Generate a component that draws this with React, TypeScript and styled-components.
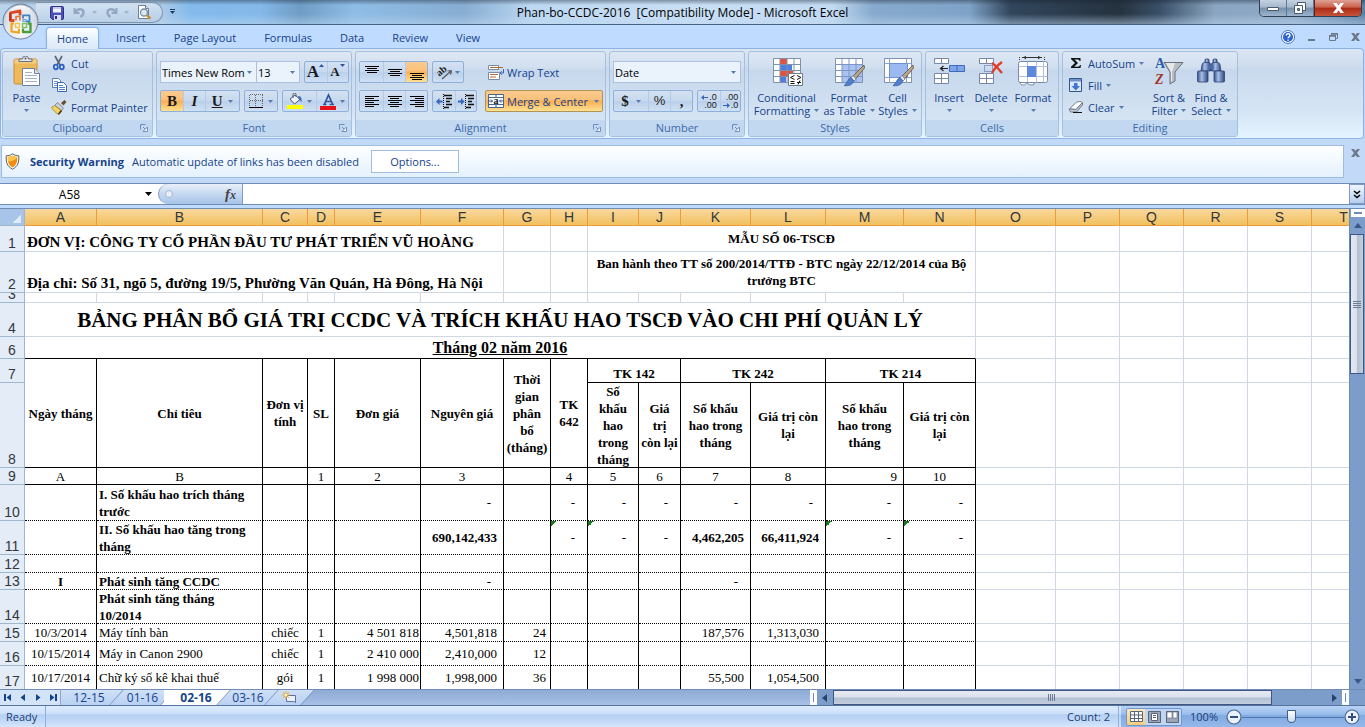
import React from "react";
import styled, { createGlobalStyle, css } from "styled-components";

const GlobalStyle = createGlobalStyle`
  *, *::before, *::after { box-sizing: border-box; }
  html, body, #root { height: 100%; }
  body {
    margin: 0;
    overflow: hidden;
    font-family: "Open Sans", "Noto Sans", sans-serif;
    font-size: 11px;
    color: #15428b;
  }
  button, input, select { font: inherit; color: inherit; margin: 0; padding: 0; border: 0; background: none; }
  button { cursor: default; }
  svg { display: block; flex: none; }
`;

const Shell = styled.div`
  display: flex;
  flex-direction: column;
  height: 100vh;
  background: #bfdbff;
`;

/* ---------- shared bits ---------- */

const Caret = ({ color = "#567db1" }: { color?: string }) => (
  <svg width="5" height="3" viewBox="0 0 5 3"><path d="M0 0h5L2.500 3z" fill={color} /></svg>
);

/* ---------- title bar ---------- */

const TitleBar = styled.header`
  position: relative;
  display: flex;
  align-items: flex-start;
  height: 25px;
  flex: none;
  border-bottom: 1px solid #47607f;
  background:
    linear-gradient(180deg, rgba(20, 30, 44, 0.4) 0, rgba(20, 30, 44, 0) 5px, rgba(255, 255, 255, 0) 14px, rgba(190, 215, 240, 0.5) 24px),
    linear-gradient(90deg, #b9d3ec 0, #a9c9e8 12%, #83bbec 14%, #85b9ea 19%, #6f9cc4 22%, #8ebde6 26%, #87add2 34%, #bcd8f2 39%, #c8dff5 50%, #c2daf2 61%, #86a9cd 64%, #7fa3c8 71%, #31465c 74%, #25323f 82%, #3a5068 85%, #8aa5c1 89%, #8faac7 95%, #5d7fa3 100%);
`;

const Orb = styled.button`
  position: absolute;
  left: 2px;
  top: 3px;
  z-index: 2;
  width: 37px;
  height: 37px;
`;

const QuickAccess = styled.div`
  display: flex;
  align-items: center;
  height: 21px;
  margin: 2px 0 0 36px;
  padding: 0 9px 0 14px;
  border: 1px solid #7f93ab;
  border-left: 0;
  border-radius: 0 11px 11px 0;
  background: linear-gradient(180deg, rgba(235, 242, 250, 0.6), rgba(190, 208, 228, 0.6));
`;

const QuickButton = styled.button<{ $wide?: boolean }>`
  display: flex;
  align-items: center;
  justify-content: space-between;
  width: ${(p) => (p.$wide ? 30 : 16)}px;
  height: 18px;
  margin-right: ${(p) => (p.$wide ? 2 : 7)}px;
  &:last-child { margin-right: 0; }
`;

const Customize = styled.button`
  display: flex;
  flex-direction: column;
  align-items: center;
  gap: 1px;
  margin: 9px 0 0 7px;
  &::before { content: ""; width: 5px; height: 1px; background: #1d3c66; }
`;

const TitleText = styled.h1`
  position: absolute;
  left: 0;
  right: 0;
  top: 3px;
  margin: 0;
  text-align: center;
  font-size: 12px;
  font-weight: 400;
  line-height: 20px;
  color: #000;
  white-space: pre;
`;

const WindowButtons = styled.div`
  display: flex;
  margin: 0 3px 0 auto;
  height: 17px;
  border: 1px solid #2f4154;
  border-top: 0;
  border-radius: 0 0 5px 5px;
  overflow: hidden;
`;

const WindowButton = styled.button<{ $close?: boolean }>`
  display: flex;
  align-items: center;
  justify-content: center;
  width: ${(p) => (p.$close ? 47 : 27)}px;
  border-left: ${(p) => (p.$close ? "1px solid #5c2320" : "0")};
  border-right: ${(p) => (p.$close ? "0" : "1px solid #5b7592")};
  background: ${(p) =>
    p.$close
      ? "linear-gradient(180deg, #dfa093 0, #c9614c 45%, #ad2a15 50%, #c4553a 100%)"
      : "linear-gradient(180deg, #c5d2e0 0, #a4b8cd 45%, #7690ac 50%, #9db4cc 100%)"};
`;

/* ---------- ribbon tabs ---------- */

const TabRow = styled.nav`
  display: flex;
  align-items: flex-end;
  gap: 6px;
  flex: none;
  height: 23px;
  padding-left: 46px;
  background: #bfdbff;
`;

const RibbonTab = styled.button<{ $active?: boolean }>`
  position: relative;
  height: 22px;
  padding: 0 10px 1px;
  border: 1px solid transparent;
  border-bottom: 0;
  border-radius: 4px 4px 0 0;
  ${(p) =>
    p.$active &&
    css`
      margin-bottom: -1px;
      border-color: #8db2e3;
      background: linear-gradient(180deg, #fdfeff 0, #e6effb 60%, #dde9f7 100%);
      box-shadow: 0 0 2px #7fc7e8;
    `}
`;

const DocControls = styled.div`
  display: flex;
  align-items: center;
  gap: 13px;
  align-self: center;
  margin: 0 5px 0 auto;
`;

/* ---------- ribbon ---------- */

const Ribbon = styled.section`
  display: flex;
  gap: 3px;
  flex: none;
  height: 91px;
  margin-right: 1px;
  padding: 2px 1px 3px;
  border: 1px solid #8db2e3;
  border-radius: 4px;
  background: linear-gradient(180deg, #dbe6f4 0, #cfdded 18%, #c9d9ed 22%, #d6e5f5 70%, #e3f4ff 100%);
  box-shadow: 0 1px 1px #9bbbe3;
`;

const GroupBox = styled.section<{ $width: number }>`
  display: flex;
  flex-direction: column;
  flex: none;
  width: ${(p) => p.$width}px;
  height: 86px;
  border: 1px solid #a5bfdf;
  border-radius: 3px;
  background: linear-gradient(180deg, #dee8f5 0, #d1dfef 18%, #c7d8ed 22%, #d9e8f5 100%);
  overflow: hidden;
`;

const GroupBody = styled.div<{ $rows?: boolean }>`
  flex: 1;
  display: flex;
  padding: ${(p) => (p.$rows ? "9px 3px 0" : "0 2px")};
  gap: ${(p) => (p.$rows ? "4px" : "0")};
`;

const GroupLabel = styled.h2`
  display: flex;
  align-items: center;
  height: 16px;
  margin: 0;
  padding: 0 3px;
  font-size: 11px;
  line-height: 16px;
  font-weight: 400;
  color: #3e6aaa;
  background: #c1d8f0;
  span { flex: 1; text-align: center; }
`;

const Launcher = styled.button`
  width: 9px;
  height: 9px;
  margin-left: -9px;
`;

const Stack = styled.div<{ $gap?: number; $width?: number }>`
  display: flex;
  flex-direction: column;
  flex: none;
  gap: ${(p) => p.$gap ?? 0}px;
  width: ${(p) => (p.$width ? p.$width + "px" : "auto")};
`;

const Line = styled.div`
  display: flex;
  gap: 4px;
`;

const BigButton = styled.button<{ $width: number }>`
  display: flex;
  flex-direction: column;
  align-items: center;
  flex: none;
  width: ${(p) => p.$width}px;
  padding-top: 4px;
  line-height: 13px;
  white-space: nowrap;
  > svg { margin-bottom: 3px; }
`;

const LabelTail = styled.span`
  display: flex;
  align-items: center;
  justify-content: center;
  gap: 4px;
  height: 13px;
`;

const SmallButton = styled.button`
  display: flex;
  align-items: center;
  gap: 4px;
  height: 22px;
  padding-left: 3px;
  white-space: nowrap;
  > svg:first-child { width: 16px; }
`;

const ButtonStrip = styled.div`
  display: flex;
  flex: none;
  height: 22px;
  border: 1px solid #8fb0da;
  border-radius: 2px;
  background: linear-gradient(180deg, #d4e1f2 0, #c7d9ee 48%, #bbd0ea 52%, #cfe0f3 100%);
  overflow: hidden;
`;

const hot = css`
  background: linear-gradient(180deg, #f9cb90 0, #fbc078 45%, #fbae52 50%, #fde190 100%);
`;

const StripButton = styled.button<{ $width: number; $on?: boolean }>`
  display: flex;
  align-items: center;
  justify-content: space-evenly;
  width: ${(p) => p.$width}px;
  height: 20px;
  color: #1b1b1b;
  & + & { border-left: 1px solid #b3cbe8; }
  ${(p) => p.$on && hot}
`;

const Glyph = styled.span<{ $italic?: boolean; $underline?: boolean; $sans?: boolean }>`
  font-family: ${(p) => (p.$sans ? '"Liberation Sans", sans-serif' : '"Liberation Serif", serif')};
  font-size: ${(p) => (p.$sans ? 13 : 15)}px;
  line-height: 16px;
  font-weight: ${(p) => (p.$sans ? 400 : 700)};
  font-style: ${(p) => (p.$italic ? "italic" : "normal")};
  text-decoration: ${(p) => (p.$underline ? "underline" : "none")};
`;

const Combo = styled.label<{ $width: number }>`
  position: relative;
  display: flex;
  align-items: center;
  flex: none;
  width: ${(p) => p.$width}px;
  height: 22px;
  border: 1px solid #abc1de;
  background: #eaf2fb;
  & + & { margin-left: -5px; }
  > svg { position: absolute; right: 4px; top: 9px; pointer-events: none; }
`;

const ComboSelect = styled.select`
  appearance: none;
  width: 100%;
  height: 20px;
  padding: 0 8px 0 1px;
  color: #000;
  outline: 0;
  text-overflow: clip;
`;

const Divider = styled.div`
  width: 1px;
  height: 55px;
  margin-top: -3px;
  background: #9fbbe0;
  box-shadow: 1px 0 0 #edf4fc;
`;

const WrapButton = styled.button`
  display: flex;
  align-items: center;
  gap: 3px;
  width: 118px;
  height: 22px;
  padding-left: 3px;
`;

const MergeButton = styled(WrapButton)`
  border: 1px solid #b39355;
  border-radius: 2px;
  padding: 0 3px 0 2px;
  white-space: nowrap;
  ${hot}
  > svg:last-child { margin-left: auto; }
`;

/* ---------- message bar ---------- */

const MessageRow = styled.div`
  display: flex;
  flex: none;
  height: 44px;
  padding: 6px 0 5px 1px;
  background: #c2d9f7;
`;

const MessageBar = styled.div`
  display: flex;
  align-items: center;
  flex: 1;
  height: 33px;
  padding-left: 3px;
  border: 1px solid #9ebce0;
  background: linear-gradient(180deg, #ffffff 0, #f1f8fe 50%, #e4f1fe 100%);
  strong { margin: 0 8px 0 10px; }
`;

const OptionsButton = styled.button`
  width: 88px;
  height: 23px;
  margin-left: 12px;
  border: 1px solid #9ebce0;
  background: #fff;
`;

const MessageClose = styled.button`
  align-self: flex-start;
  width: 21px;
  padding: 4px 0 0 7px;
`;

/* ---------- formula bar ---------- */

const FormulaRow = styled.div`
  display: flex;
  flex: none;
  height: 22px;
  border-top: 1px solid #6f8db5;
  border-bottom: 1px solid #6f8db5;
  background: #fff;
`;

const NameBox = styled.label`
  display: flex;
  align-items: center;
  width: 158px;
  padding-right: 6px;
`;

const NameInput = styled.input`
  width: 100%;
  padding-right: 6px;
  text-align: center;
  font-size: 12px;
  color: #000;
  outline: 0;
`;

const FxPill = styled.div`
  display: flex;
  align-items: center;
  justify-content: space-between;
  width: 85px;
  padding: 0 6px;
  border: 1px solid #7d9bc6;
  border-width: 0 1px;
  border-radius: 11px 0 0 11px;
  background: linear-gradient(180deg, #e9f1fb 0, #c5d8f0 50%, #a7c3ea 100%);
`;

const FxButton = styled.button`
  font-family: "Liberation Serif", serif;
  font-style: italic;
  font-weight: 700;
  font-size: 15px;
  line-height: 18px;
  color: #444;
  small { font-size: 12px; }
`;

const FormulaInput = styled.input`
  flex: 1;
  padding: 0 4px;
  color: #000;
  outline: 0;
`;

const ExpandButton = styled.button`
  display: flex;
  align-items: center;
  justify-content: center;
  width: 16px;
  border: 1px solid #7d9bc6;
  background: linear-gradient(180deg, #eff5fd, #b7cdee);
`;

/* ---------- sheet ---------- */

const SheetArea = styled.main`
  display: flex;
  flex: 1;
  min-height: 0;
  margin-top: 3px;
  border-top: 1px solid #6f8db5;
`;

const SheetView = styled.div`
  flex: 1;
  min-width: 0;
  overflow: hidden;
  background: #fff;
`;

const Grid = styled.table`
  width: 1376px;
  table-layout: fixed;
  border-collapse: separate;
  border-spacing: 0;
  font-family: "Liberation Serif", serif;
  font-size: 13px;
  line-height: 17px;
  color: #000;
`;

const Corner = styled.td`
  height: 17px;
  padding: 0;
  border-right: 1px solid #9eb6ce;
  border-bottom: 1px solid #9eb6ce;
  background: linear-gradient(135deg, transparent 0 50%, #dfeafa 50% 100%) 12px 5px / 9px 9px no-repeat, #a9c4e9;
`;

const ColHead = styled.th`
  height: 17px;
  padding: 0;
  border-right: 1px solid #ee9a3a;
  border-bottom: 1px solid #ee9a3a;
  background: linear-gradient(180deg, #f9d99f 0, #f1c15f 100%);
  font-family: "Liberation Sans", Arial, sans-serif;
  font-size: 14px;
  font-weight: 400;
  line-height: 16px;
  color: #33373c;
`;

const RowHead = styled.th`
  padding: 0;
  border-right: 1px solid #9eb6ce;
  border-bottom: 1px solid #9eb6ce;
  background: #e4ecf7;
  font-family: "Liberation Sans", Arial, sans-serif;
  font-size: 14px;
  line-height: 16px;
  color: #33373c;
`;

type LineKind = "grid" | "solid" | "dotted";
const lineCss: Record<LineKind, string> = {
  grid: "1px solid #d0d7e5",
  solid: "1px solid #000",
  dotted: "1px dotted #000",
};

const Cell = styled.td<{ $bottom: LineKind; $right: LineKind; $flag?: boolean }>`
  padding: 0;
  border-bottom: ${(p) => lineCss[p.$bottom]};
  border-right: ${(p) => lineCss[p.$right]};
  ${(p) => p.$flag && css`background: linear-gradient(135deg, #1b7a1b 50%, transparent 50%) 0 0 / 6px 6px no-repeat;`}
`;

type HAlign = "left" | "center" | "right";
const CellText = styled.div<{ $height: number; $align: HAlign; $low?: boolean; $bold?: boolean; $pad: number; $size?: number; $underline?: boolean }>`
  display: flex;
  align-items: ${(p) => (p.$low ? "flex-end" : "center")};
  justify-content: ${(p) => ({ left: "flex-start", center: "center", right: "flex-end" })[p.$align]};
  height: ${(p) => p.$height - 1}px;
  padding: 0 ${(p) => (p.$align === "right" ? p.$pad : 0)}px 0 ${(p) => (p.$align === "left" ? 2 : 0)}px;
  overflow: hidden;
  white-space: pre;
  text-align: ${(p) => (p.$align === "left" ? "left" : "center")};
  font-weight: ${(p) => (p.$bold ? 700 : 400)};
  ${(p) => p.$size && css`font-size: ${p.$size}px; line-height: ${p.$size + 3}px;`}
  text-decoration: ${(p) => (p.$underline ? "underline" : "none")};
`;

/* ---------- scroll bars ---------- */

const VScroll = styled.div`
  display: flex;
  flex-direction: column;
  align-items: center;
  flex: none;
  width: 16px;
  border-left: 1px solid #6d8bb8;
  background: #7c9dca;
`;

const SplitV = styled.div`
  width: 14px;
  height: 8px;
  border: 3px solid #fff;
  background: #6d8bb8;
`;

const VTrack = styled.div`
  flex: 1;
  width: 100%;
`;

const VThumb = styled.div`
  display: flex;
  align-items: center;
  justify-content: center;
  width: 14px;
  height: 32%;
  border: 1px solid #3f5781;
  background: linear-gradient(90deg, #e4e8f1 0, #dbe2ec 45%, #b1bfd2 55%, #c6d0df 100%);
`;

const ArrowButton = styled.button`
  display: flex;
  align-items: center;
  justify-content: center;
  flex: none;
  width: 16px;
  height: 17px;
`;

const BottomRow = styled.div`
  display: flex;
  flex: none;
  height: 17px;
  border-top: 1px solid #6f8db5;
  border-bottom: 1px solid #56739f;
  background: #9ab6de;
`;

const TabStrip = styled.nav`
  flex: 54;
  min-width: 0;
  display: flex;
  background: linear-gradient(180deg, #8fabd6, #a6c0e6);
`;

const TabNav = styled.div`
  display: flex;
  flex: none;
  width: 61px;
  background: #d3e3f8;
  border-right: 1px solid #8aa8d3;
`;

const NavButton = styled.button`
  display: flex;
  align-items: center;
  justify-content: center;
  width: 15px;
`;

const TabList = styled.div`
  display: flex;
  overflow: hidden;
  padding-right: 8px;
`;

const SheetTab = styled.button<{ $width: number; $active?: boolean }>`
  position: relative;
  display: flex;
  align-items: center;
  justify-content: center;
  z-index: ${(p) => (p.$active ? 2 : 1)};
  width: ${(p) => p.$width}px;
  height: 15px;
  font-size: 12px;
  line-height: 15px;
  font-weight: ${(p) => (p.$active ? 700 : 400)};
  &::before {
    content: "";
    position: absolute;
    inset: 0;
    z-index: -1;
    transform: skewX(-42deg);
    border-right: 1px solid #7a98c6;
    background: ${(p) => (p.$active ? "#fff" : "linear-gradient(180deg, #cfe0f7, #b9d1f2)")};
  }
  &:first-child::before { left: -12px; }
  ${(p) =>
    p.$active &&
    css`
      &::after {
        content: "";
        position: absolute;
        inset: 0 50% 0 -4px;
        z-index: -1;
        background: #fff;
      }
    `}
`;

const HScroll = styled.div`
  flex: 37;
  min-width: 0;
  display: flex;
  align-items: center;
  background: #7c9dca;
`;

const SplitH = styled.div`
  flex: none;
  width: 7px;
  height: 15px;
  border: 3px solid #fff;
  background: #6d8bb8;
`;

const HTrack = styled.div`
  flex: 1;
  height: 15px;
`;

const HThumb = styled.div`
  display: flex;
  align-items: center;
  justify-content: center;
  width: 89%;
  height: 15px;
  border: 1px solid #3f5781;
  background: linear-gradient(180deg, #e6eaf2 0, #dbe2ec 45%, #b3c0d3 55%, #c4cfdf 100%);
`;

const ScrollCorner = styled.div`
  flex: none;
  width: 16px;
`;

/* ---------- status bar ---------- */

const StatusBar = styled.footer`
  display: flex;
  align-items: stretch;
  flex: none;
  height: 21px;
  color: #1a3c74;
  background: linear-gradient(180deg, #dcebfd 0, #cfe1fa 35%, #b5d0f2 42%, #c3daf7 75%, #d5e7fc 100%);
`;

const StatusText = styled.span<{ $end?: boolean }>`
  display: flex;
  align-items: center;
  margin-left: ${(p) => (p.$end ? "auto" : "0")};
  padding: 0 8px 0 6px;
  border-right: 1px solid #90b0dc;
`;

const StatusTools = styled.div`
  display: flex;
  align-items: center;
  gap: 8px;
  margin-left: 2px;
  padding: 0 5px;
  background: linear-gradient(180deg, #b9d3f5 0, #9abdeb 40%, #82abe2 45%, #94b8e9 100%);
`;

const ViewButtons = styled.div`
  display: flex;
  height: 18px;
  border: 1px solid #6e96cf;
  border-radius: 2px;
  overflow: hidden;
`;

const ViewButton = styled.button<{ $on?: boolean }>`
  display: flex;
  align-items: center;
  justify-content: center;
  width: 18px;
  background: ${(p) => (p.$on ? "linear-gradient(180deg, #fbe9bd, #f6cd79)" : "#c0d5f2")};
`;

const ZoomBox = styled.div`
  display: flex;
  align-items: center;
`;

const ZoomSlider = styled.input`
  appearance: none;
  width: 102px;
  height: 16px;
  background: linear-gradient(#5277ad, #5277ad) 0 8px / 100% 1px no-repeat;
  &::-webkit-slider-thumb {
    appearance: none;
    width: 9px;
    height: 13px;
    background: linear-gradient(180deg, #fff, #c7d8ee);
    border: 1px solid #405d8c;
    border-radius: 1px 1px 5px 5px;
  }
`;

/* ---------- icons ---------- */

const OfficeOrb = () => (
  <svg width="37" height="37" viewBox="0 0 37 37">
    <defs>
      <radialGradient id="orb" cx="50%" cy="75%" r="75%">
        <stop offset="0" stopColor="#fff" />
        <stop offset="0.55" stopColor="#dde3ec" />
        <stop offset="1" stopColor="#a9b6c8" />
      </radialGradient>
      <linearGradient id="orbTop" x1="0" y1="0" x2="0" y2="1">
        <stop offset="0" stopColor="#fff" stopOpacity="0.95" />
        <stop offset="1" stopColor="#e8edf4" stopOpacity="0.3" />
      </linearGradient>
    </defs>
    <circle cx="18.500" cy="18.500" r="17.500" fill="url(#orb)" stroke="#71829a" />
    <path d="M3 18a15.500 15.500 0 0 1 31 0c-8-3-23-3-31 0z" fill="url(#orbTop)" />
    <g fill="none" strokeLinejoin="round">
      <path d="M12.500 17.500H8.500V9.800L18 8v4.500" stroke="#dd4a22" strokeWidth="2.800" />
      <path d="M8 17.500V10" stroke="#b52c10" strokeWidth="1.600" />
      <path d="M14 17.500v-4h4v4" stroke="#ea7338" strokeWidth="1.600" />
      <path d="M21 15.500v-3.200h6.500v6h-3.500" stroke="#3b82c9" strokeWidth="1.800" />
      <path d="M21 18.500v-2h3v2z" stroke="#69a7e0" strokeWidth="1.200" />
      <path d="M12 20.500H9.500v8l7.500 1.200v-4" stroke="#f0a51c" strokeWidth="2.200" />
      <path d="M13.500 20.500h4v4h-4z" stroke="#f7c54a" strokeWidth="1.400" />
      <path d="M25.500 20.500h3v8.500H21v-3.500" stroke="#4b9e3f" strokeWidth="2.400" />
      <path d="M20.500 20.500h4v4h-4z" stroke="#7cc060" strokeWidth="1.400" />
    </g>
  </svg>
);

const SaveIcon = () => (
  <svg width="14" height="14" viewBox="0 0 14 14">
    <path d="M.5 1.500a1 1 0 0 1 1-1h11a1 1 0 0 1 1 1v11a1 1 0 0 1-1 1h-10l-2-2z" fill="#4a52b8" stroke="#2b3086" />
    <path d="M3 1h8v5.500H3z" fill="#f1f4fb" />
    <path d="M3 1h8v2H3z" fill="#c6cdea" />
    <path d="M4 9h7v5H4z" fill="#d7dcee" />
    <path d="M5 10h2v3H5z" fill="#2b3086" />
  </svg>
);

const UndoIcon = ({ flip }: { flip?: boolean }) => (
  <svg width="13" height="13" viewBox="0 0 13 13">
    <g transform={flip ? "matrix(-1 0 0 1 13 0)" : undefined}>
      <path d="M1.500 2v5h5" fill="none" stroke="#94a7c1" strokeWidth="2" />
      <path d="M2.500 6C5 2 10.500 2.500 10.500 6.500c0 2-1.500 3.500-3 4.500" fill="none" stroke="#94a7c1" strokeWidth="2.400" />
    </g>
  </svg>
);

const PreviewIcon = () => (
  <svg width="15" height="15" viewBox="0 0 15 15">
    <path d="M1.500.5h7l3 3v10h-10z" fill="#fff" stroke="#6f7f94" />
    <path d="M8.500.5v3h3" fill="#dbe3ee" stroke="#6f7f94" />
    <circle cx="7" cy="7.500" r="3.500" fill="#d6eaf8" stroke="#7d8ea3" strokeWidth="1.300" />
    <path d="M9.600 10l3.900 3.700" stroke="#c98a2c" strokeWidth="2.400" />
  </svg>
);

const HelpIcon = () => (
  <svg width="14" height="14" viewBox="0 0 14 14">
    <circle cx="7" cy="7" r="6.500" fill="#fff" stroke="#4676c4" />
    <circle cx="7" cy="7" r="5" fill="#2a62d0" />
    <path d="M5.200 5.600c0-2.400 3.800-2.400 3.800 0 0 1.300-1.900 1.300-1.900 2.700M7.100 9.400v1.400" fill="none" stroke="#fff" strokeWidth="1.400" />
  </svg>
);

const CloseX = ({ size = 9, color = "#6c7887" }: { size?: number; color?: string }) => (
  <svg width={size} height={size - 1} viewBox="0 0 9 8">
    <path d="M0 0h3l1.500 2L6 0h3L6 4l3 4H6L4.500 6 3 8H0l3-4z" fill={color} />
  </svg>
);

const LaunchIcon = () => (
  <svg width="8" height="8" viewBox="0 0 8 8">
    <path d="M.5 5.500v-5h5" fill="none" stroke="#6d8fbe" />
    <path d="M3 3l3 3" stroke="#6d8fbe" />
    <path d="M7.500 3v4.500H3z" fill="#fff" stroke="#6d8fbe" />
  </svg>
);

const PasteIcon = () => (
  <svg width="30" height="32" viewBox="0 0 30 32">
    <rect x="2" y="3" width="23" height="25" rx="1.500" fill="#edb95a" stroke="#c98f35" />
    <path d="M2.500 3.500h22v4h-22z" fill="#f3cd82" />
    <path d="M7 5.500V3h3.500a3 3 0 0 1 6 0H20v2.500z" fill="#e4e7ec" stroke="#6b7079" />
    <circle cx="13.500" cy="2.500" r="1" fill="#555" />
    <path d="M10.500 12.500h12l5 5v12h-17z" fill="#fff" stroke="#6d7f9b" />
    <path d="M22.500 12.500v5h5" fill="#dfe6f0" stroke="#6d7f9b" />
    <path d="M13 16.500h7M13 19.500h12M13 22.500h12M13 25.500h12" stroke="#a3b2c9" />
  </svg>
);

const CutIcon = () => (
  <svg width="16" height="16" viewBox="0 0 16 16">
    <path d="M4 1l5 9M11 1L6 10" stroke="#5b6675" strokeWidth="1.700" />
    <ellipse cx="4.800" cy="12" rx="2" ry="2.300" fill="none" stroke="#2f5fc0" strokeWidth="1.800" />
    <ellipse cx="10.800" cy="12" rx="2" ry="2.300" fill="none" stroke="#2f5fc0" strokeWidth="1.800" />
  </svg>
);

const CopyIcon = () => (
  <svg width="16" height="16" viewBox="0 0 16 16">
    <path d="M1.500 1.500h6l2 2v7h-8z" fill="#fff" stroke="#5b7cb4" />
    <path d="M3 4.500h4M3 6.500h4M3 8.500h4" stroke="#6f98d8" />
    <path d="M6.500 5.500h6l3 3v6h-9z" fill="#fff" stroke="#3d65a8" />
    <path d="M8 8.500h4M8 10.500h6M8 12.500h6" stroke="#4c7fd0" />
  </svg>
);

const PainterIcon = () => (
  <svg width="16" height="16" viewBox="0 0 16 16">
    <path d="M10 4l3.500-3 2 2-3 3.500z" fill="#6a4c2e" />
    <path d="M6.500 3.500l6 5.500-2 2.500-7-5z" fill="#c6ced9" stroke="#6c7787" strokeWidth=".8" />
    <path d="M3.500 6.500l7 5-3 4C5 14 2 11 .5 8.500z" fill="#f3d566" stroke="#a07d22" strokeWidth=".8" />
    <path d="M7.500 15.300l3-3.800" stroke="#4a3414" strokeWidth="1.600" />
  </svg>
);

const BorderIcon = () => (
  <svg width="14" height="14" viewBox="0 0 14 14" shapeRendering="crispEdges">
    <path d="M.5.5h13M.5 6.500h13M.5.5v12M6.500.5v12M13.500.5v12" fill="none" stroke="#666" strokeDasharray="1 1" />
    <path d="M0 13.500h14" stroke="#000" />
  </svg>
);

const FillColorIcon = () => (
  <svg width="17" height="16" viewBox="0 0 17 16">
    <path d="M3 6l5-4 5 4.500-5.500 4.500z" fill="#eef1f6" stroke="#4e5a6b" />
    <path d="M6 5V1.500a1.500 1.500 0 0 1 3 0V4" fill="none" stroke="#4e5a6b" />
    <path d="M11 3c3 0 4 2 3.500 6.500-1-2-2-2.500-2.500-3z" fill="#4169b0" />
    <path d="M0 12h16v4H0z" fill="#ffff00" />
  </svg>
);

const FontColorIcon = () => (
  <svg width="17" height="17" viewBox="0 0 17 17">
    <path d="M3 11.500h3.500M9.500 11.500H14M4.500 11L8.500 2l4 9M6 8.500h5" fill="none" stroke="#2f569e" strokeWidth="1.700" />
    <path d="M0 13h16v4H0z" fill="#e8111b" />
  </svg>
);

const GrowIcon = ({ down }: { down?: boolean }) => (
  <svg width="6" height="4" viewBox="0 0 6 4">
    <path d={down ? "M0 0h5L2.500 3z" : "M0 3h5L2.500 0z"} fill="#2f569e" />
  </svg>
);

const GrowLabel = styled.span<{ $small?: boolean }>`
  display: flex;
  align-items: flex-start;
  font-family: "Liberation Serif", serif;
  font-weight: 700;
  font-size: ${(p) => (p.$small ? 13 : 17)}px;
  line-height: 16px;
`;

type BarKind = "top" | "middle" | "bottom" | "left" | "center" | "right";
const Bars = ({ kind }: { kind: BarKind }) => {
  const start = { top: 1, middle: 4, bottom: 8, left: 2, center: 2, right: 2 }[kind];
  const vertical = kind === "top" || kind === "middle" || kind === "bottom";
  const shortWidth = vertical ? 10 : 9;
  const shortX = kind === "left" ? 0 : kind === "right" ? 14 - shortWidth : 2;
  return (
    <svg width="14" height="15" viewBox="0 0 14 15" shapeRendering="crispEdges">
      {Array.from({ length: vertical ? 4 : 6 }, (_, i) => (
        <rect key={i} x={i % 2 ? shortX : 0} y={start + i * 2} width={i % 2 ? shortWidth : 14} height={1} fill="#000" />
      ))}
    </svg>
  );
};

const IndentIcon = ({ right }: { right?: boolean }) => (
  <svg width="17" height="15" viewBox="0 0 17 15">
    <path d="M8 1.500h8M10 4.500h6M10 7.500h4M10 10.500h6M8 13.500h5" stroke="#111" strokeWidth="1.600" />
    <path d="M7.500 0v15" stroke="#111" strokeDasharray="1 1" />
    <path d={right ? "M0 6.500h3v-2.500l3.500 3.500L3 11V8.500H0z" : "M6.500 6.500h-3v-2.500L0 7.500 3.500 11V8.500h3z"} fill="#3566bd" />
  </svg>
);

const OrientIcon = () => (
  <svg width="17" height="18" viewBox="0 0 17 18">
    <text x="2" y="12" fontSize="10" fontWeight="700" fontFamily="Liberation Serif" fill="#222" transform="rotate(-40 5 11)">ab</text>
    <path d="M6 16l9-8M15.500 7.500l-4 .500M15.500 7.500l-1 4" fill="none" stroke="#555" strokeWidth="1.200" />
  </svg>
);

const WrapIcon = () => (
  <svg width="16" height="15" viewBox="0 0 16 15">
    <path d="M.5.500h10v4H.5z" fill="#fff" stroke="#7d8ba0" />
    <path d="M2 2.500h13" stroke="#b36b34" />
    <path d="M.5 7.500h11v7H.5z" fill="#fff" stroke="#7d8ba0" />
    <path d="M2 9.500h8M2 12h6" stroke="#b36b34" />
    <path d="M15.500 4v4h-3M13.800 6.200L12.200 8l1.600 1.800" fill="none" stroke="#3566bd" />
  </svg>
);

const MergeIcon = () => (
  <svg width="16" height="14" viewBox="0 0 16 14">
    <path d="M.5.500h15v13H.5z" fill="#fff" stroke="#47658f" />
    <path d="M.5 3.500h15M.5 10.500h15M8 .5v3M8 10.500v3" stroke="#47658f" />
    <path d="M1 7h3.500M11.500 7H15M3 5.500L4.500 7 3 8.500M13 5.500L11.500 7 13 8.500" fill="none" stroke="#2b58ab" />
    <text x="5.500" y="9.500" fontSize="10" fontWeight="700" fontFamily="Liberation Serif" fill="#111">a</text>
  </svg>
);

const DecimalLabel = styled.span`
  display: flex;
  flex-direction: column;
  align-items: flex-end;
  font-family: "Liberation Sans", sans-serif;
  font-size: 9px;
  line-height: 8px;
  span { display: flex; align-items: center; gap: 1px; }
`;

const TinyArrow = ({ right }: { right?: boolean }) => (
  <svg width="7" height="5" viewBox="0 0 7 5">
    <path d={right ? "M0 2h4V0l3 2.500L4 5V3H0z" : "M7 2H3V0L0 2.500 3 5V3h4z"} fill="#3566bd" />
  </svg>
);

const GridBase = ({ children }: { children?: React.ReactNode }) => (
  <svg width="32" height="32" viewBox="0 0 32 32">
    <path d="M2.500 2.500h27v24h-27z" fill="#fff" stroke="#8091ad" />
    {children}
  </svg>
);

const Brush = () => (
  <g>
    <path d="M31 9L20 20l2.500 3L31.500 12z" fill="#b9a68a" stroke="#5a5348" strokeWidth=".8" />
    <path d="M20 19.500l3 3.500-2 2-3-3.200z" fill="#e6e9ee" stroke="#6c7787" strokeWidth=".7" />
    <path d="M18 21.500l3 3.500c-1.500 4-6 5.500-10 4.500 3-1.500 3.500-6.500 7-8z" fill="#4f7fce" stroke="#315a9f" strokeWidth=".7" />
  </g>
);

const ConditionalIcon = () => (
  <GridBase>
    <path d="M9 3h7v6H9zM9 15h13v6H9z" fill="#e2523d" />
    <path d="M9 9h12v6H9zM9 21h6v5H9z" fill="#4f7de0" />
    <path d="M2.500 8.500h27M2.500 14.500h27M2.500 20.500h27M9 3v24M16 3v24M23 3v24" stroke="#8091ad" fill="none" />
    <path d="M17.500 17.500h14v12h-14z" fill="#fff" stroke="#707a88" />
    <path d="M23.500 19.500l-4 2 4 2M19.500 25.500h4M19.500 27.500h4M26 19.500l4 2-4 2M26 26.500h4M29 24.500l-2 4" fill="none" stroke="#111" />
  </GridBase>
);

const TableIcon = () => (
  <GridBase>
    <path d="M9 9h20v17H9z" fill="#a9c2f1" />
    <path d="M2.500 8.500h27M2.500 14.500h27M2.500 20.500h27M9 3v24M16 3v24M23 3v24" stroke="#7f96c4" fill="none" />
    <Brush />
  </GridBase>
);

const CellStyleIcon = () => (
  <GridBase>
    <path d="M2.500 7.500h27M2.500 21.500h27M7.500 3v24M24.500 3v24" stroke="#8fa2c4" fill="none" />
    <path d="M7.500 7.500h18v14h-18z" fill="#9db9f1" stroke="#6c8fd8" />
    <Brush />
  </GridBase>
);

const InsertIcon = () => (
  <svg width="32" height="32" viewBox="0 0 32 32">
    <path d="M1.500 2.500h14v5h-14zM8.500 2.500v5M1.500 17.500h14v10h-14zM8.500 17.500v10M1.500 22.500h14" fill="#fff" stroke="#7688a5" />
    <path d="M16.500 9.500h15v6h-15z" fill="#7ea4ea" stroke="#3f69b8" />
    <path d="M24 9.500v6" stroke="#3f69b8" />
    <path d="M8 12.500h7M10.500 10l-3 2.500 3 2.500" fill="none" stroke="#222" strokeWidth="1.200" />
  </svg>
);

const DeleteIcon = () => (
  <svg width="32" height="32" viewBox="0 0 32 32">
    <path d="M4.500 2.500h14v5h-14zM11.500 2.500v5M4.500 17.500h14v10h-14zM11.500 17.500v10M4.500 22.500h14" fill="#fff" stroke="#7688a5" />
    <path d="M9.500 9.500h8v6h-8z" fill="none" stroke="#3f5fa8" strokeDasharray="1 1" />
    <path d="M17 7c3 2 7 6 10 10M27 6c-4 3-8 7-10 11" fill="none" stroke="#e23a24" strokeWidth="2.200" />
  </svg>
);

const FormatIcon = () => (
  <svg width="32" height="32" viewBox="0 0 32 32">
    <path d="M2.500 4V0M27.500 4V0" stroke="#333" strokeDasharray="1 1" />
    <path d="M5 1.500h20M9 0L7 1.500 9 3M21 0l2 1.500L21 3" fill="none" stroke="#333" />
    <rect x="1.500" y="5.500" width="29" height="21" rx="2" fill="#fff" stroke="#7688a5" />
    <path d="M1.500 10.500h29M1.500 20.500h29M10.500 5.500v21M19.500 5.500v21M26.500 5.500v21" stroke="#b4c1d6" />
    <rect x="10" y="10" width="9" height="11" fill="#5b87dc" />
    <path d="M3 26.500c0 3 5 3 6 1s3 3 8 1v-2z" fill="#fff" stroke="#7688a5" />
  </svg>
);

const SigmaIcon = () => (
  <svg width="16" height="14" viewBox="0 0 16 14">
    <path d="M3 2h9.500v3h-1c-.2-1-.7-1.500-2-1.500H6.500L10 7l-3.800 3.700h3.600c1.300 0 1.900-.5 2.200-1.700h1L12.500 12H3v-1.200L7 7 3 3z" fill="#111" />
  </svg>
);

const FillIcon = () => (
  <svg width="16" height="16" viewBox="0 0 16 16">
    <path d="M1.500 1.500h12v13h-12z" fill="#dbe7fa" stroke="#33558f" />
    <path d="M2 2h11v2.500H2z" fill="#6f93cf" />
    <path d="M6 6h3.500v3H12l-4.200 4.500L3.500 9H6z" fill="#3f74d8" />
  </svg>
);

const EraserIcon = () => (
  <svg width="16" height="14" viewBox="0 0 16 14">
    <path d="M1.500 9L8 2.500c1-1 6-1.500 6.500 0L8 9.500z" fill="#fdfdfd" stroke="#707a88" />
    <path d="M1.500 9L8 9.500l6.500-7v2.500L8.500 12H3C1.500 11.500 1 10 1.500 9z" fill="#c4cad4" stroke="#707a88" />
    <path d="M5 12.500h9" stroke="#111" />
  </svg>
);

const SortIcon = () => (
  <svg width="32" height="32" viewBox="0 0 32 32">
    <path d="M11 6.500h19L22 16v9l-5 3V16z" fill="#b9bdc4" stroke="#6a6f78" />
    <path d="M13 7h9l-3 9v9l-1 1V16z" fill="#e6e8ec" />
    <text x="2" y="12" fontSize="14" fontWeight="700" fontFamily="Liberation Serif" fill="#2f5ca8">A</text>
    <text x="2" y="28" fontSize="14" fontWeight="700" fontStyle="italic" fontFamily="Liberation Serif" fill="#a33129">Z</text>
  </svg>
);

const FindIcon = () => (
  <svg width="32" height="32" viewBox="0 0 32 32">
    <defs>
      <linearGradient id="bino" x1="0" y1="0" x2="1" y2="0">
        <stop offset="0" stopColor="#33528f" />
        <stop offset="0.400" stopColor="#a9c1e8" />
        <stop offset="1" stopColor="#2c4680" />
      </linearGradient>
    </defs>
    <g fill="url(#bino)" stroke="#2c4274" strokeWidth=".8">
      <rect x="10" y="3" width="4" height="5" rx="1" />
      <rect x="18" y="3" width="4" height="5" rx="1" />
      <path d="M7 9c0-1.500 1-2.500 3-2.500h3.500c1.500 0 2 1 2 2V15H6z" />
      <path d="M16.500 15V8.500c0-1 .5-2 2-2H22c2 0 3 1 3 2.500l1 6z" />
      <rect x="2.500" y="15" width="10.500" height="11" rx="1" />
      <rect x="19" y="15" width="10.500" height="11" rx="1" />
    </g>
    <rect x="13.500" y="9" width="5" height="4" fill="#4c6aa6" />
  </svg>
);

const ShieldIcon = () => (
  <svg width="15" height="17" viewBox="0 0 15 17">
    <path d="M7.500.8c2 1.500 4 2 6.200 2 .6 6-.7 10.500-6.200 13.400C2 13.300.7 8.800 1.300 2.800c2.200 0 4.200-.5 6.200-2z" fill="#fff" stroke="#5b5f68" />
    <path d="M7.500 2.600c1.500 1 3 1.400 4.700 1.500.3 4.700-.7 8.100-4.700 10.400-4-2.300-5-5.700-4.700-10.400 1.700-.1 3.200-.5 4.700-1.500z" fill="#f58a10" />
    <path d="M7.500 2.600c1.500 1 3 1.400 4.700 1.500-1 2.500-5 4.500-9.400 4.500-.1-1.500-.1-3 0-4.500 1.700-.1 3.200-.5 4.700-1.500z" fill="#fdc64a" />
  </svg>
);

const Triangle = ({ d, color = "#24436f" }: { d: "up" | "down" | "left" | "right"; color?: string }) => {
  const path = { up: "M0 6h8L4 1z", down: "M0 2h8L4 7z", left: "M6 0v8L1 4z", right: "M2 0v8l5-4z" }[d];
  return <svg width="8" height="8" viewBox="0 0 8 8"><path d={path} fill={color} /></svg>;
};

const NavIcon = ({ d }: { d: string }) => (
  <svg width="8" height="7" viewBox="0 0 8 7"><path d={d} fill="#15428b" /></svg>
);

const ZoomCircle = ({ plus }: { plus?: boolean }) => (
  <svg width="16" height="16" viewBox="0 0 16 16">
    <circle cx="8" cy="8" r="7" fill="#eaf1fb" stroke="#4c6896" strokeWidth="1.200" />
    <path d="M4 8h8" stroke="#33507f" strokeWidth="2" />
    {plus && <path d="M8 4v8" stroke="#33507f" strokeWidth="2" />}
  </svg>
);

/* ---------- data ---------- */

type Item = {
  t?: string;
  span?: number;
  rows?: number;
  align?: HAlign;
  bold?: boolean;
  low?: boolean;
  pad?: number;
  size?: number;
  underline?: boolean;
  bottom?: LineKind;
  right?: LineKind;
  flag?: boolean;
};

const columns: [string, number][] = [
  ["A", 72], ["B", 166], ["C", 45], ["D", 27], ["E", 86], ["F", 83], ["G", 47], ["H", 37], ["I", 51], ["J", 42],
  ["K", 70], ["L", 75], ["M", 78], ["N", 72], ["O", 80], ["P", 64], ["Q", 64], ["R", 64], ["S", 64], ["T", 64],
];

const rowHeights: Record<number, number> = {
  1: 26, 2: 41, 3: 10, 4: 34, 6: 22, 7: 24, 8: 85, 9: 17, 10: 36, 11: 34, 12: 18, 13: 17, 14: 34, 15: 18, 16: 24, 17: 24,
};

const head = (t: string, extra: Item = {}): Item => ({ t, bold: true, bottom: "solid", right: "solid", ...extra });
const blank = (n: number): Item[] => Array.from({ length: n }, () => ({}));
const free = blank(6);
const num = (t?: string): Item => ({ t, align: "right", pad: 6 });
const dash: Item = { t: "-", align: "right", pad: 12 };

/* body rows share one line style across columns A to N */
const body = (items: Item[], line: LineKind): Item[] => [
  ...items.map((i) => ({ right: "solid" as LineKind, bottom: line, ...i })),
  ...free,
];

const asset = (date: string, name: string, unit: string, qty: string, price: string, cost: string, months: string, monthly?: string, rest?: string): Item[] =>
  body(
    [
      { t: date }, { t: name, align: "left" }, { t: unit }, { t: qty }, { t: price, align: "right", pad: 1 }, num(cost),
      { t: months, align: "right", pad: 4 }, {}, {}, {}, num(monthly), num(rest), {}, {},
    ],
    "dotted",
  );

const rows: [number, Item[]][] = [
  [1, [
    { t: "ĐƠN VỊ: CÔNG TY CỔ PHẦN ĐẦU TƯ PHÁT TRIỂN VŨ HOÀNG", span: 6, align: "left", bold: true, low: true, size: 15 },
    {}, {}, { t: "MẪU SỐ 06-TSCĐ", span: 6, bold: true }, ...free,
  ]],
  [2, [
    { t: "Địa chỉ: Số 31, ngõ 5, đường 19/5, Phường Văn Quán, Hà Đông, Hà Nội", span: 6, align: "left", bold: true, low: true, size: 15 },
    {}, {}, { t: "Ban hành theo TT số 200/2014/TTĐ - BTC ngày 22/12/2014 của Bộ\ntrưởng BTC", span: 6, bold: true }, ...free,
  ]],
  [3, blank(20)],
  [4, [{ t: "BẢNG PHÂN BỔ GIÁ TRỊ CCDC VÀ TRÍCH KHẤU HAO TSCĐ VÀO CHI PHÍ QUẢN LÝ", span: 14, bold: true, size: 21 }, ...free]],
  [6, [{ t: "Tháng 02 năm 2016", span: 14, bold: true, size: 16, underline: true, bottom: "solid" }, ...free]],
  [7, [
    head("Ngày tháng", { rows: 2 }), head("Chỉ tiêu", { rows: 2 }), head("Đơn vị\ntính", { rows: 2 }), head("SL", { rows: 2 }),
    head("Đơn giá", { rows: 2 }), head("Nguyên giá", { rows: 2 }), head("Thời\ngian\nphân\nbổ\n(tháng)", { rows: 2 }),
    head("TK\n642", { rows: 2 }), head("TK 142", { span: 2, low: true }), head("TK 242", { span: 2, low: true }),
    head("TK 214", { span: 2, low: true }), ...free,
  ]],
  [8, [
    head("Số\nkhấu\nhao\ntrong\ntháng"), head("Giá\ntrị\ncòn lại"), head("Số khấu\nhao trong\ntháng"), head("Giá trị còn\nlại"),
    head("Số khấu\nhao trong\ntháng"), head("Giá trị còn\nlại"), ...free,
  ]],
  [9, body([
    { t: "A" }, { t: "B" }, {}, { t: "1" }, { t: "2" }, { t: "3" }, {}, { t: "4" }, { t: "5" }, { t: "6" }, { t: "7" }, { t: "8" }, num("9"), { t: "10" },
  ], "solid")],
  [10, body([
    {}, { t: "I. Số khấu hao trích tháng\ntrước", align: "left", bold: true }, {}, {}, {}, dash, {}, dash, dash, dash, dash, dash, dash, dash,
  ], "dotted")],
  [11, body([
    {}, { t: "II. Số khấu hao tăng trong\ntháng", align: "left", bold: true }, {}, {}, {}, { ...num("690,142,433"), bold: true }, {},
    { ...dash, flag: true }, { ...dash, flag: true }, dash, { ...num("4,462,205"), bold: true }, { ...num("66,411,924"), bold: true },
    { ...dash, flag: true }, { ...dash, flag: true },
  ], "dotted")],
  [12, body(blank(14), "dotted")],
  [13, body([{ t: "I", bold: true }, { t: "Phát sinh tăng CCDC", align: "left", bold: true }, {}, {}, {}, dash, {}, {}, {}, {}, dash, {}, {}, {}], "dotted")],
  [14, body([{}, { t: "Phát sinh tăng tháng\n10/2014", align: "left", bold: true }, ...blank(12)], "dotted")],
  [15, asset("10/3/2014", "Máy tính bàn", "chiếc", "1", "4 501 818", "4,501,818", "24", "187,576", "1,313,030")],
  [16, asset("10/15/2014", "Máy in Canon 2900", "chiếc", "1", "2 410 000", "2,410,000", "12")],
  [17, asset("10/17/2014", "Chữ ký số kê khai thuế", "gói", "1", "1 998 000", "1,998,000", "36", "55,500", "1,054,500")],
];

/* ---------- composed parts ---------- */

const Group = ({ title, width, launcher, children, rows: isRows }: { title: string; width: number; launcher?: boolean; children: React.ReactNode; rows?: boolean }) => (
  <GroupBox $width={width}>
    <GroupBody $rows={isRows}>{children}</GroupBody>
    <GroupLabel>
      <span>{title}</span>
      {launcher && <Launcher aria-label={title + " options"}><LaunchIcon /></Launcher>}
    </GroupLabel>
  </GroupBox>
);

const Big = ({ icon, width, first, second }: { icon: React.ReactNode; width: number; first: string; second?: string }) => (
  <BigButton $width={width}>
    {icon}
    <span>{first}</span>
    <LabelTail>{second}<Caret /></LabelTail>
  </BigButton>
);

const Select = ({ label, value, width }: { label: string; value: string; width: number }) => (
  <Combo $width={width}>
    <ComboSelect aria-label={label} defaultValue={value}><option>{value}</option></ComboSelect>
    <Caret />
  </Combo>
);

const Sheet = () => (
  <Grid>
    <colgroup>
      <col width={25} />
      {columns.map(([name, w]) => <col key={name} width={w} />)}
    </colgroup>
    <thead>
      <tr>
        <Corner />
        {columns.map(([name]) => <ColHead key={name} scope="col">{name}</ColHead>)}
      </tr>
    </thead>
    <tbody>
      {rows.map(([n, items]) => (
        <tr key={n}>
          <RowHead scope="row"><CellText $height={rowHeights[n]} $align="center" $low $pad={0}>{n}</CellText></RowHead>
          {items.map((c, i) => (
            <Cell key={i} colSpan={c.span} rowSpan={c.rows} $bottom={c.bottom ?? "grid"} $right={c.right ?? "grid"} $flag={c.flag}>
              <CellText
                $height={rowHeights[n] + (c.rows === 2 ? rowHeights[n + 1] : 0)}
                $align={c.align ?? "center"}
                $low={c.low}
                $bold={c.bold}
                $pad={c.pad ?? 0}
                $size={c.size}
                $underline={c.underline}
              >
                {c.t}
              </CellText>
            </Cell>
          ))}
        </tr>
      ))}
    </tbody>
  </Grid>
);

const tabs = ["Home", "Insert", "Page Layout", "Formulas", "Data", "Review", "View"];

export default function App() {
  return (
    <Shell>
      <GlobalStyle />
      <TitleBar>
        <Orb aria-label="Office Button"><OfficeOrb /></Orb>
        <TitleText>{"Phan-bo-CCDC-2016  [Compatibility Mode] - Microsoft Excel"}</TitleText>
        <QuickAccess>
          <QuickButton aria-label="Save"><SaveIcon /></QuickButton>
          <QuickButton aria-label="Undo" $wide><UndoIcon /><Caret color="#a3b3c8" /><span /></QuickButton>
          <QuickButton aria-label="Redo" $wide><UndoIcon flip /><Caret color="#a3b3c8" /><span /></QuickButton>
          <QuickButton aria-label="Print Preview"><PreviewIcon /></QuickButton>
        </QuickAccess>
        <Customize aria-label="Customize Quick Access Toolbar"><Caret color="#1d3c66" /></Customize>
        <WindowButtons>
          <WindowButton aria-label="Minimize">
            <svg width="12" height="8" viewBox="0 0 12 8"><path d="M.5 3.500h11v3H.5z" fill="#fff" stroke="#4a5a6c" /></svg>
          </WindowButton>
          <WindowButton aria-label="Restore">
            <svg width="12" height="12" viewBox="0 0 12 12">
              <path d="M3.500.5h8v8h-8z" fill="#fff" stroke="#4a5a6c" />
              <path d="M.5 3.500h8v8h-8z" fill="#fff" stroke="#4a5a6c" />
              <path d="M3.500 6.500h2v2h-2z" fill="#7690ac" stroke="#4a5a6c" />
            </svg>
          </WindowButton>
          <WindowButton $close aria-label="Close"><CloseX size={11} color="#fff" /></WindowButton>
        </WindowButtons>
      </TitleBar>

      <TabRow>
        {tabs.map((t, i) => <RibbonTab key={t} $active={i === 0}>{t}</RibbonTab>)}
        <DocControls>
          <button aria-label="Help"><HelpIcon /></button>
          <button aria-label="Minimize window"><svg width="8" height="8" viewBox="0 0 8 8"><path d="M0 6h7v2H0z" fill="#6c7887" /></svg></button>
          <button aria-label="Restore window">
            <svg width="9" height="8" viewBox="0 0 9 8"><path d="M.5 3h6v4.500h-6zM2.500 3V1h6v4.500h-2" fill="none" stroke="#6c7887" /><path d="M0 2h7v1.500H0zM2 0h7v1.500H2z" fill="#6c7887" /></svg>
          </button>
          <button aria-label="Close window"><CloseX /></button>
        </DocControls>
      </TabRow>

      <Ribbon>
        <Group title="Clipboard" width={151} launcher>
          <Big icon={<PasteIcon />} width={43} first="Paste" />
          <Stack>
            <SmallButton><CutIcon />Cut</SmallButton>
            <SmallButton><CopyIcon />Copy</SmallButton>
            <SmallButton><PainterIcon />Format Painter</SmallButton>
          </Stack>
        </Group>

        <Group title="Font" width={196} launcher rows>
          <Stack $gap={7}>
            <Line>
              <Select label="Font" value="Times New Rom" width={97} />
              <Select label="Font size" value="13" width={44} />
              <ButtonStrip>
                <StripButton $width={22} aria-label="Grow font"><GrowLabel>A<GrowIcon /></GrowLabel></StripButton>
                <StripButton $width={21} aria-label="Shrink font"><GrowLabel $small>A<GrowIcon down /></GrowLabel></StripButton>
              </ButtonStrip>
            </Line>
            <Line>
              <ButtonStrip>
                <StripButton $width={22} $on><Glyph>B</Glyph></StripButton>
                <StripButton $width={22}><Glyph $italic>I</Glyph></StripButton>
                <StripButton $width={34}><Glyph $underline>U</Glyph><Caret /></StripButton>
              </ButtonStrip>
              <ButtonStrip>
                <StripButton $width={32} aria-label="Borders"><BorderIcon /><Caret /></StripButton>
              </ButtonStrip>
              <ButtonStrip>
                <StripButton $width={33} aria-label="Fill color"><FillColorIcon /><Caret /></StripButton>
                <StripButton $width={32} aria-label="Font color"><FontColorIcon /><Caret /></StripButton>
              </ButtonStrip>
            </Line>
          </Stack>
        </Group>

        <Group title="Alignment" width={251} launcher rows>
          <Stack $gap={7}>
            <Line>
              <ButtonStrip>
                <StripButton $width={23} aria-label="Top align"><Bars kind="top" /></StripButton>
                <StripButton $width={22} aria-label="Middle align"><Bars kind="middle" /></StripButton>
                <StripButton $width={22} $on aria-label="Bottom align"><Bars kind="bottom" /></StripButton>
              </ButtonStrip>
              <ButtonStrip>
                <StripButton $width={30} aria-label="Orientation"><OrientIcon /><Caret /></StripButton>
              </ButtonStrip>
            </Line>
            <Line>
              <ButtonStrip>
                <StripButton $width={23} aria-label="Align left"><Bars kind="left" /></StripButton>
                <StripButton $width={22} aria-label="Center"><Bars kind="center" /></StripButton>
                <StripButton $width={22} aria-label="Align right"><Bars kind="right" /></StripButton>
              </ButtonStrip>
              <ButtonStrip>
                <StripButton $width={22} aria-label="Decrease indent"><IndentIcon /></StripButton>
                <StripButton $width={21} aria-label="Increase indent"><IndentIcon right /></StripButton>
              </ButtonStrip>
            </Line>
          </Stack>
          <Divider />
          <Stack $gap={7}>
            <WrapButton><WrapIcon />Wrap Text</WrapButton>
            <MergeButton><MergeIcon />Merge &amp; Center<Caret /></MergeButton>
          </Stack>
        </Group>

        <Group title="Number" width={136} launcher rows>
          <Stack $gap={7}>
            <Select label="Number format" value="Date" width={128} />
            <Line>
              <ButtonStrip>
                <StripButton $width={34}><Glyph>$</Glyph><Caret /></StripButton>
                <StripButton $width={22}><Glyph $sans>%</Glyph></StripButton>
                <StripButton $width={22}><Glyph>,</Glyph></StripButton>
              </ButtonStrip>
              <ButtonStrip>
                <StripButton $width={22} aria-label="Increase decimal"><DecimalLabel><span><TinyArrow />.0</span><span>.00</span></DecimalLabel></StripButton>
                <StripButton $width={20} aria-label="Decrease decimal"><DecimalLabel><span>.00</span><span><TinyArrow right />.0</span></DecimalLabel></StripButton>
              </ButtonStrip>
            </Line>
          </Stack>
        </Group>

        <Group title="Styles" width={174}>
          <Big icon={<ConditionalIcon />} width={71} first="Conditional" second="Formatting" />
          <Big icon={<TableIcon />} width={54} first="Format" second="as Table" />
          <Big icon={<CellStyleIcon />} width={43} first="Cell" second="Styles" />
        </Group>

        <Group title="Cells" width={134}>
          <Big icon={<InsertIcon />} width={42} first="Insert" />
          <Big icon={<DeleteIcon />} width={42} first="Delete" />
          <Big icon={<FormatIcon />} width={42} first="Format" />
        </Group>

        <Group title="Editing" width={176}>
          <Stack $width={83}>
            <SmallButton><SigmaIcon />AutoSum <Caret /></SmallButton>
            <SmallButton><FillIcon />Fill <Caret /></SmallButton>
            <SmallButton><EraserIcon />Clear <Caret /></SmallButton>
          </Stack>
          <Big icon={<SortIcon />} width={42} first="Sort &amp;" second="Filter" />
          <Big icon={<FindIcon />} width={42} first="Find &amp;" second="Select" />
        </Group>
      </Ribbon>

      <MessageRow>
        <MessageBar>
          <ShieldIcon />
          <strong>Security Warning</strong>
          <span>Automatic update of links has been disabled</span>
          <OptionsButton>Options...</OptionsButton>
        </MessageBar>
        <MessageClose aria-label="Close message"><CloseX /></MessageClose>
      </MessageRow>

      <FormulaRow>
        <NameBox>
          <NameInput aria-label="Name box" defaultValue="A58" />
          <svg width="7" height="4" viewBox="0 0 7 4"><path d="M0 0h7L3.500 4z" fill="#000" /></svg>
        </NameBox>
        <FxPill>
          <svg width="8" height="8" viewBox="0 0 8 8"><circle cx="4" cy="4" r="3.500" fill="#e9eef6" stroke="#a3b6d2" /></svg>
          <FxButton aria-label="Insert function">f<small>x</small></FxButton>
        </FxPill>
        <FormulaInput aria-label="Formula bar" />
        <ExpandButton aria-label="Expand formula bar">
          <svg width="8" height="9" viewBox="0 0 8 9"><path d="M1 1l3 2.500L7 1M1 5l3 2.500L7 5" fill="none" stroke="#000" strokeWidth="1.600" /></svg>
        </ExpandButton>
      </FormulaRow>

      <SheetArea>
        <SheetView><Sheet /></SheetView>
        <VScroll>
          <SplitV />
          <ArrowButton aria-label="Scroll up"><Triangle d="up" color="#3c5688" /></ArrowButton>
          <VTrack>
            <VThumb><svg width="8" height="7" viewBox="0 0 8 7"><path d="M0 .5h8M0 2.500h8M0 4.500h8M0 6.500h8" stroke="#6c7c95" /></svg></VThumb>
          </VTrack>
          <ArrowButton aria-label="Scroll down"><Triangle d="down" color="#3c5688" /></ArrowButton>
        </VScroll>
      </SheetArea>

      <BottomRow>
        <TabStrip>
          <TabNav>
            <NavButton aria-label="First sheet"><NavIcon d="M0 0h2v7H0zM7 0v7L2.500 3.500z" /></NavButton>
            <NavButton aria-label="Previous sheet"><NavIcon d="M6 0v7L1.500 3.500z" /></NavButton>
            <NavButton aria-label="Next sheet"><NavIcon d="M2 0v7l4.500-3.500z" /></NavButton>
            <NavButton aria-label="Last sheet"><NavIcon d="M6 0h2v7H6zM1 0v7l4.500-3.500z" /></NavButton>
          </TabNav>
          <TabList>
            <SheetTab $width={56}>12-15</SheetTab>
            <SheetTab $width={51}>01-16</SheetTab>
            <SheetTab $width={56} $active>02-16</SheetTab>
            <SheetTab $width={48}>03-16</SheetTab>
            <SheetTab $width={36} aria-label="Insert worksheet">
              <svg width="16" height="14" viewBox="0 0 16 14">
                <path d="M4.500 4.500h9v7l-2-1h-7z" fill="#eaf0fa" stroke="#5d7199" />
                <path d="M4 0v8M0 4h8M1.200 1.200l5.600 5.600M6.800 1.200L1.200 6.800" stroke="#e9a12c" />
                <circle cx="4" cy="4" r="1.500" fill="#fff2b8" />
              </svg>
            </SheetTab>
          </TabList>
        </TabStrip>
        <HScroll>
          <SplitH />
          <ArrowButton aria-label="Scroll left"><Triangle d="left" /></ArrowButton>
          <HTrack>
            <HThumb><svg width="8" height="7" viewBox="0 0 8 7"><path d="M.5 0v7M2.500 0v7M4.500 0v7M6.500 0v7" stroke="#6c7c95" /></svg></HThumb>
          </HTrack>
          <ArrowButton aria-label="Scroll right"><Triangle d="right" /></ArrowButton>
          <SplitH />
          <ScrollCorner />
        </HScroll>
      </BottomRow>

      <StatusBar>
        <StatusText>Ready</StatusText>
        <StatusText $end>Count: 2</StatusText>
        <StatusTools>
          <ViewButtons>
            <ViewButton $on aria-label="Normal view">
              <svg width="13" height="11" viewBox="0 0 13 11"><path d="M.5.5h12v10H.5zM.5 4h12M.5 7.500h12M4.500.5v10M8.500.5v10" fill="#fff" stroke="#5a6579" /></svg>
            </ViewButton>
            <ViewButton aria-label="Page layout view">
              <svg width="13" height="12" viewBox="0 0 13 12"><path d="M.5.5h12v11H.5z" fill="#9aa5b6" stroke="#5a6579" /><path d="M3.500 2.500h6v7h-6z" fill="#fff" stroke="#5a6579" /><path d="M5 4.500h3M5 6.500h3" stroke="#5a6579" /></svg>
            </ViewButton>
            <ViewButton aria-label="Page break view">
              <svg width="13" height="12" viewBox="0 0 13 12"><path d="M.5.5h12v11H.5z" fill="#9aa5b6" stroke="#5a6579" /><path d="M1 1h5v6H1zM7 1h4v6H7z" fill="#fff" stroke="#5a6579" strokeWidth=".6" /></svg>
            </ViewButton>
          </ViewButtons>
          <span>100%</span>
          <ZoomBox>
            <button aria-label="Zoom out"><ZoomCircle /></button>
            <ZoomSlider type="range" aria-label="Zoom" min={10} max={190} defaultValue={98} />
            <button aria-label="Zoom in"><ZoomCircle plus /></button>
          </ZoomBox>
        </StatusTools>
      </StatusBar>
    </Shell>
  );
}
